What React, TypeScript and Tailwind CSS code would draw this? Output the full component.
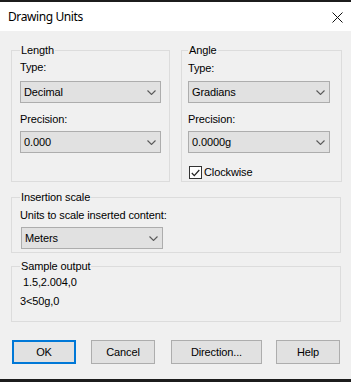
import React from "react";

const Chevron = () => (
  <svg width="9" height="5" viewBox="0 0 9 5" className="block">
    <path d="M0.5 0.5 L4.5 4.5 L8.5 0.5" stroke="#5a5a5a" fill="none" strokeWidth="1.1" />
  </svg>
);

function Combo({ value, className }: { value: string; className: string }) {
  return (
    <div
      className={
        "flex h-[22px] items-center justify-between border border-[#adadad] bg-[#e1e1e1] pl-[3px] pr-[4px] " +
        className
      }
    >
      <span className="leading-[13px]">{value}</span>
      <Chevron />
    </div>
  );
}

function Btn({ label, className }: { label: string; className: string }) {
  return (
    <div
      className={
        "flex h-[24px] items-center justify-center bg-[#e1e1e1] leading-[13px] " + className
      }
    >
      {label}
    </div>
  );
}

export default function App() {
  return (
    <div
      className="w-[351px] h-[382px] flex flex-col bg-[#f0f0f0] text-[11px] tracking-[-0.12px] text-black overflow-hidden"
      style={{ fontFamily: '"Liberation Sans", Arial, sans-serif' }}
    >
      <div className="h-[2px] bg-[#1c1c1c]" />
      <div className="h-[29px] bg-white flex items-center justify-between pl-[8px] pr-[8px]">
        <span
          className="text-[12px] leading-[16px] mt-[1px] tracking-[-0.4px]"
          style={{ fontFamily: '"Noto Sans", "Open Sans", sans-serif' }}
        >
          Drawing Units
        </span>
        <svg width="11" height="11" viewBox="0 0 11 11" className="block mt-[1px]">
          <path d="M0.5 0.5 L10.5 10.5 M10.5 0.5 L0.5 10.5" stroke="#111" strokeWidth="1" fill="none" />
        </svg>
      </div>

      <div className="flex-1 flex flex-col pl-[11px] pt-[13px]">
        <div className="flex gap-[11px]">
          <fieldset className="w-[158px] h-[138px] border border-[#dcdcdc] px-[8px] m-0">
            <legend className="px-[1px] leading-[13px]">Length</legend>
            <div className="leading-[13px] mt-[4px]">Type:</div>
            <Combo value="Decimal" className="w-[141px] mt-[7px]" />
            <div className="leading-[13px] mt-[10px]">Precision:</div>
            <Combo value="0.000" className="w-[141px] mt-[5px]" />
          </fieldset>
          <fieldset className="w-[161px] h-[138px] border border-[#dcdcdc] px-[6px] m-0">
            <legend className="px-[1px] leading-[13px]">Angle</legend>
            <div className="leading-[13px] mt-[5px]">Type:</div>
            <Combo value="Gradians" className="w-[142px] mt-[6px]" />
            <div className="leading-[13px] mt-[10px]">Precision:</div>
            <Combo value="0.0000g" className="w-[142px] mt-[5px]" />
            <div className="flex items-center mt-[13px] ml-[1px]">
              <div className="w-[13px] h-[13px] border border-[#333333] bg-white flex items-center justify-center">
                <svg width="9" height="8" viewBox="0 0 9 8" className="block">
                  <path d="M0.8 4 L3.3 6.6 L8.3 1" stroke="#222" strokeWidth="1.2" fill="none" />
                </svg>
              </div>
              <span className="ml-[2px] leading-[13px]">Clockwise</span>
            </div>
          </fieldset>
        </div>

        <fieldset className="w-[330px] h-[62px] border border-[#dcdcdc] px-[8px] m-0 mt-[9px]">
          <legend className="px-[1px] leading-[13px]">Insertion scale</legend>
          <div className="leading-[13px] mt-[5px]">Units to scale inserted content:</div>
          <Combo value="Meters" className="w-[142px] mt-[5px] ml-[1px]" />
        </fieldset>

        <fieldset className="w-[330px] h-[62px] border border-[#dcdcdc] px-[8px] m-0 mt-[7px]">
          <legend className="px-[1px] leading-[13px]">Sample output</legend>
          <div className="leading-[13px] mt-[3px] ml-[3px]">1.5,2.004,0</div>
          <div className="leading-[13px] mt-[6px]">3&lt;50g,0</div>
        </fieldset>

        <div className="flex mt-[18px] ml-[1px]">
          <Btn label="OK" className="w-[64px] border-2 border-[#0078d7]" />
          <Btn label="Cancel" className="w-[64px] border border-[#adadad] ml-[15px]" />
          <Btn label="Direction..." className="w-[91px] border border-[#adadad] ml-[16px]" />
          <Btn label="Help" className="w-[64px] border border-[#adadad] ml-[14px]" />
        </div>
      </div>
      <div className="h-[3px] bg-[#1c1c1c]" />
    </div>
  );
}
